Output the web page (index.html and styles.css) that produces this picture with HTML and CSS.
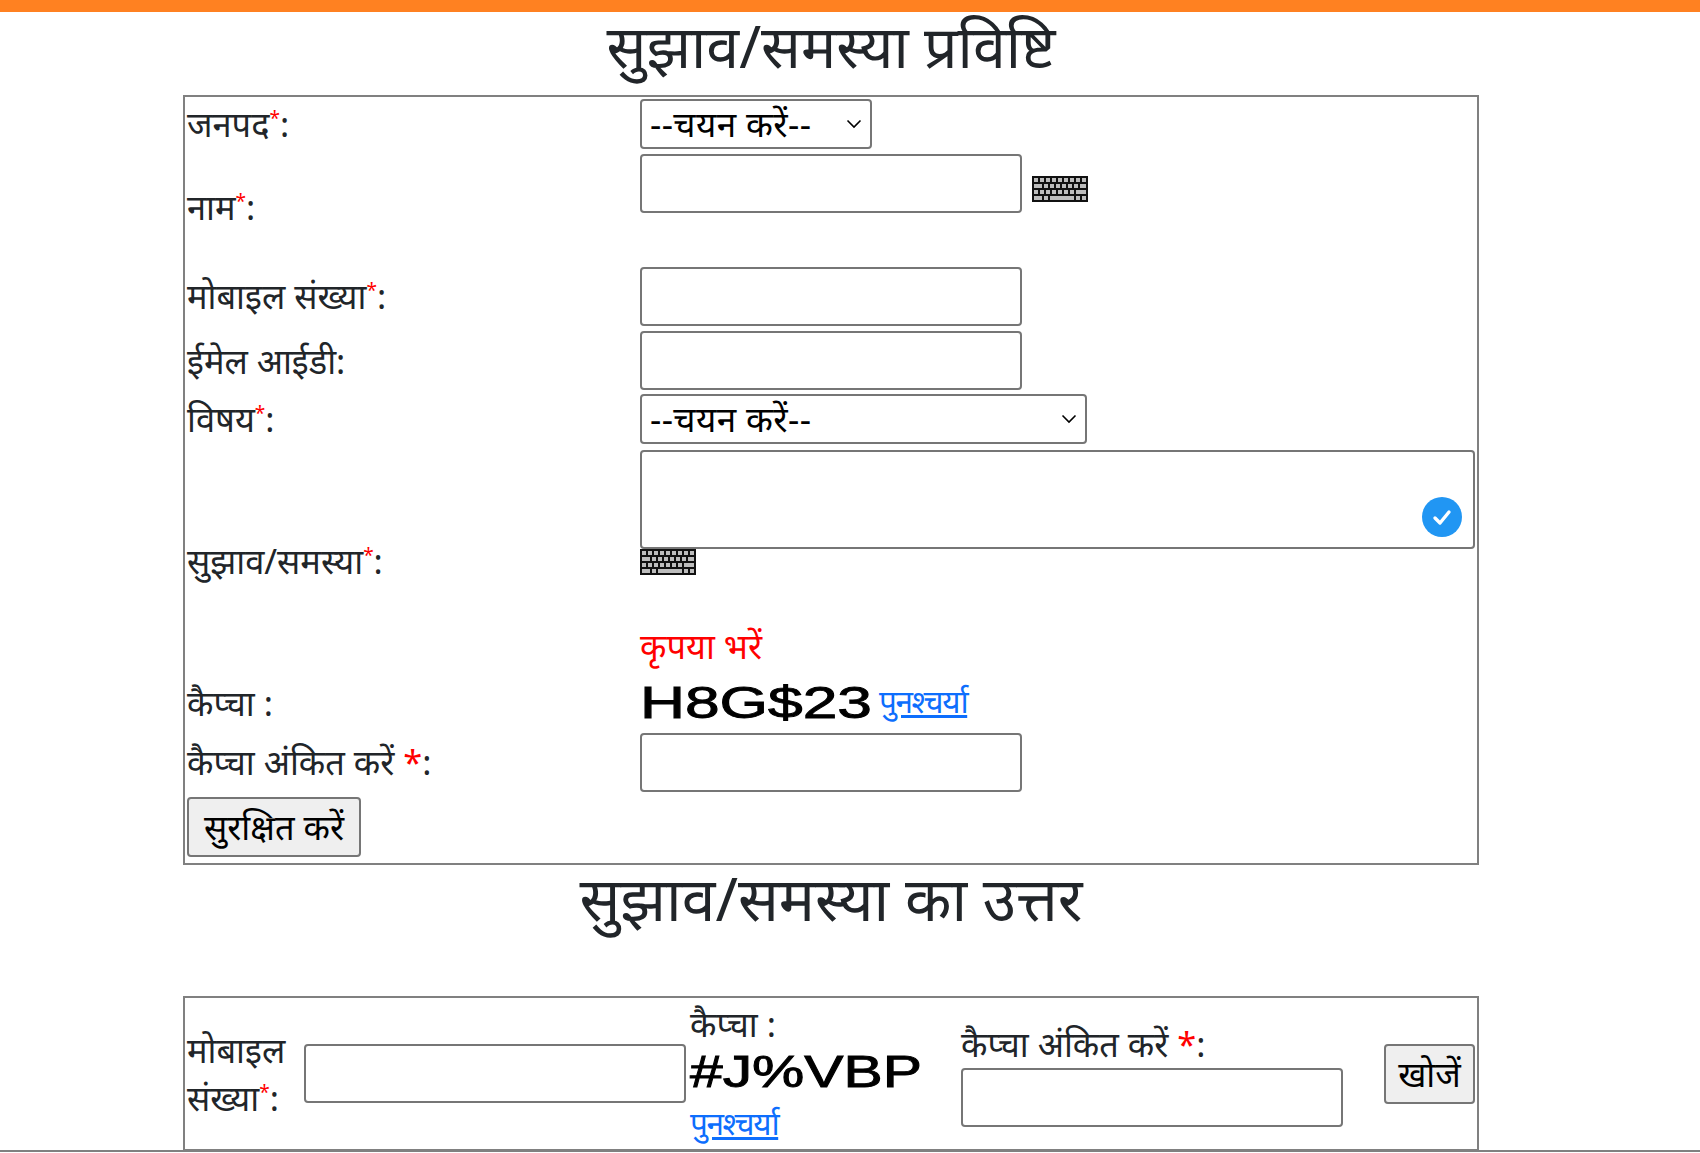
FILE: index.html
```html
<!DOCTYPE html>
<html lang="hi">
<head>
<meta charset="utf-8">
<title>सुझाव/समस्या प्रविष्टि</title>
<link rel="stylesheet" href="styles.css">
</head>
<body>
<svg class="defs" width="0" height="0" aria-hidden="true">
  <symbol id="kb" viewBox="0 0 56 26">
    <rect width="56" height="26" fill="#111"/>
    <g fill="#bdbdbd">
      <rect x="2" y="2" width="4" height="4"/><rect x="8" y="2" width="4" height="4"/><rect x="14" y="2" width="4" height="4"/><rect x="20" y="2" width="4" height="4"/><rect x="26" y="2" width="4" height="4"/><rect x="32" y="2" width="4" height="4"/><rect x="38" y="2" width="4" height="4"/><rect x="44" y="2" width="4" height="4"/><rect x="50" y="2" width="4" height="4"/>
      <rect x="2" y="8" width="8" height="4"/><rect x="12" y="8" width="4" height="4"/><rect x="18" y="8" width="4" height="4"/><rect x="24" y="8" width="4" height="4"/><rect x="30" y="8" width="4" height="4"/><rect x="36" y="8" width="4" height="4"/><rect x="42" y="8" width="4" height="4"/><rect x="48" y="8" width="6" height="4"/>
      <rect x="2" y="14" width="4" height="4"/><rect x="8" y="14" width="4" height="4"/><rect x="14" y="14" width="4" height="4"/><rect x="20" y="14" width="4" height="4"/><rect x="26" y="14" width="4" height="4"/><rect x="32" y="14" width="4" height="4"/><rect x="38" y="14" width="4" height="4"/><rect x="44" y="14" width="10" height="4"/>
      <rect x="2" y="20" width="8" height="4"/><rect x="12" y="20" width="4" height="4"/><rect x="18" y="20" width="24" height="4"/><rect x="44" y="20" width="4" height="4"/><rect x="50" y="20" width="4" height="4"/>
    </g>
  </symbol>
</svg>

<div class="topbar"></div>
<main class="page">
  <h2 class="title title-first">सुझाव/समस्या प्रविष्टि</h2>
  <table class="box form">
    <colgroup><col class="c-label"><col></colgroup>
    <tr class="r1">
      <td>जनपद<sup class="req">*</sup>:</td>
      <td><select class="sel sel-short"><option>--चयन करें--</option></select></td>
    </tr>
    <tr class="r2">
      <td>नाम<sup class="req">*</sup>:</td>
      <td class="top"><div class="with-kb"><input class="field" type="text"><svg class="kb kb-side"><use href="#kb"/></svg></div></td>
    </tr>
    <tr class="r3">
      <td>मोबाइल संख्या<sup class="req">*</sup>:</td>
      <td><input class="field" type="text"></td>
    </tr>
    <tr class="r4">
      <td>ईमेल आईडी:</td>
      <td><input class="field" type="text"></td>
    </tr>
    <tr class="r5">
      <td>विषय<sup class="req">*</sup>:</td>
      <td><select class="sel sel-long"><option>--चयन करें--</option></select></td>
    </tr>
    <tr class="r6">
      <td>सुझाव/समस्या<sup class="req">*</sup>:</td>
      <td class="top">
        <div class="area-wrap">
          <textarea class="area"></textarea>
          <svg class="check" viewBox="0 0 40 40"><circle cx="20" cy="20" r="20" fill="#2196f3"/><path d="M13 21l5 5 9-11" fill="none" stroke="#fff" stroke-width="3.4" stroke-linecap="round" stroke-linejoin="round"/></svg>
        </div>
        <svg class="kb"><use href="#kb"/></svg>
        <div class="err">कृपया भरें</div>
      </td>
    </tr>
    <tr class="r7">
      <td>कैप्चा :</td>
      <td>
        <div class="cap-line">
          <svg class="cap" viewBox="0 0 232 36"><text x="0" y="33" textLength="232" lengthAdjust="spacingAndGlyphs">H8G$23</text></svg>
          <a class="link link-inline" href="#">पुनश्चर्या</a>
        </div>
      </td>
    </tr>
    <tr class="r8">
      <td>कैप्चा अंकित करें <span class="req">*</span>:</td>
      <td><input class="field" type="text"></td>
    </tr>
    <tr class="r9">
      <td colspan="2"><button class="btn" type="button">सुरक्षित करें</button></td>
    </tr>
  </table>

  <h2 class="title title-second">सुझाव/समस्या का उत्तर</h2>

  <table class="box search">
    <colgroup><col class="s1"><col class="s2"><col class="s3"><col class="s4"><col></colgroup>
    <tr>
      <td class="s-label">मोबाइल संख्या<sup class="req">*</sup>:</td>
      <td><input class="field" type="text"></td>
      <td class="s-cap">
        <div>कैप्चा :</div>
        <svg class="cap" viewBox="0 0 232 36"><text x="0" y="33" textLength="232" lengthAdjust="spacingAndGlyphs">#J%VBP</text></svg>
        <div><a class="link" href="#">पुनश्चर्या</a></div>
      </td>
      <td class="s-input">
        <div>कैप्चा अंकित करें <span class="req">*</span>:</div>
        <input class="field" type="text">
      </td>
      <td><button class="btn btn-find" type="button">खोजें</button></td>
    </tr>
  </table>
</main>
<div class="foot-line"></div>
</body>
</html>
```
FILE: styles.css
```css
* { box-sizing: border-box; }
html, body { margin: 0; padding: 0; height: 100%; overflow: hidden; }
body {
  position: relative;
  background: #fff;
  color: #212529;
  font-family: "Noto Sans", "Noto Sans Devanagari", "Lohit Devanagari", "Open Sans", "DejaVu Sans", sans-serif;
  font-size: 34.4px;
  line-height: 48px;
}
.defs { position: absolute; }
.topbar { height: 12px; background: #ff8121; }
.page { width: 1296px; margin-left: 183px; }
.title {
  margin: 0;
  font-weight: 400;
  line-height: 66px;
  text-align: center;
}
.title-first { height: 83px; font-size: 59px; }
.title-second { height: 131px; font-size: 60.5px; line-height: 65px; }

.box {
  width: 1296px;
  table-layout: fixed;
  border: 2px solid #808080;
  border-collapse: separate;
  border-spacing: 0;
}
.box td { padding: 0; vertical-align: middle; }
.form td:first-child { padding-left: 2px; }
.box td.top { vertical-align: top; }
.c-label { width: 455px; }
.r1 { height: 54px; }
.r2 { height: 112px; }
.r3 { height: 66px; }
.r4 { height: 63px; }
.r5 { height: 54px; }
.r6 { height: 230px; }
.r7 { height: 53px; }
.r8 { height: 66px; }
.r9 { height: 68px; }
.r2 .top { padding-top: 3px; }
.r6 .top { padding-top: 4px; }
.r9 .btn { margin-bottom: 5px; }

.req { color: #f00; }
sup.req { font-size: 19px; line-height: 0; vertical-align: super; }

.field {
  display: block;
  width: 382px;
  height: 59px;
  padding: 1px 2px;
  border: 2px solid #767676;
  border-radius: 4px;
  background: #fff;
  font: inherit;
}
.sel {
  display: block;
  height: 50px;
  padding: 0 28px 0 8px;
  border: 2px solid #767676;
  border-radius: 4px;
  color: #000;
  font: inherit;
  font-size: 35px;
  letter-spacing: 0.4px;
  line-height: 1.2;
  appearance: none;
  background: #fff url("data:image/svg+xml,%3Csvg xmlns='http://www.w3.org/2000/svg' width='16' height='10' viewBox='0 0 16 10'%3E%3Cpath d='M1.5 1.5L8 8l6.5-6.5' fill='none' stroke='%23000' stroke-width='1.6'/%3E%3C/svg%3E") no-repeat right 8px center;
}
.sel-short { width: 232px; }
.sel-long { width: 447px; }
.with-kb { display: flex; align-items: flex-start; gap: 10px; }
.kb { display: block; width: 56px; height: 26px; flex: none; filter: blur(0.4px); }
.kb-side { margin-top: 22px; }
.area-wrap { position: relative; width: 835px; height: 99px; }
.area {
  display: block;
  width: 100%;
  height: 100%;
  border: 2px solid #767676;
  border-radius: 4px;
  background: #fff;
  font: inherit;
  resize: none;
}
.check { position: absolute; right: 13px; top: 47px; width: 40px; height: 40px; }
.err { margin-top: 47px; color: #f00; }
.cap-line { display: flex; align-items: center; gap: 7px; }
.cap { display: block; width: 232px; height: 36px; flex: none; overflow: visible; filter: blur(0.5px); }
.cap text { font-family: "Liberation Sans", Arial, sans-serif; font-size: 44px; fill: #000; stroke: #000; stroke-width: 0.9px; }
.link { color: #0d6efd; text-decoration: underline; font-size: 31.5px; letter-spacing: -1.4px; }
.link-inline { margin-bottom: 4px; }
.btn {
  display: block;
  height: 60px;
  padding: 0;
  border: 2px solid #767676;
  border-radius: 4px;
  background: #efefef;
  color: #000;
  font: inherit;
  line-height: 1.2;
}
.form .btn { width: 174px; }
.btn-find { width: 91px; }

.search tr { height: 151px; }
.search td:first-child { padding-left: 2px; }
.s1 { width: 119px; }
.s2 { width: 386px; }
.s3 { width: 271px; }
.s4 { width: 423px; }
.s-cap .cap { margin: 6px 0 8px; }

.foot-line {
  position: absolute;
  left: 0;
  right: 0;
  top: 1150px;
  height: 2px;
  background: #808080;
}
```
